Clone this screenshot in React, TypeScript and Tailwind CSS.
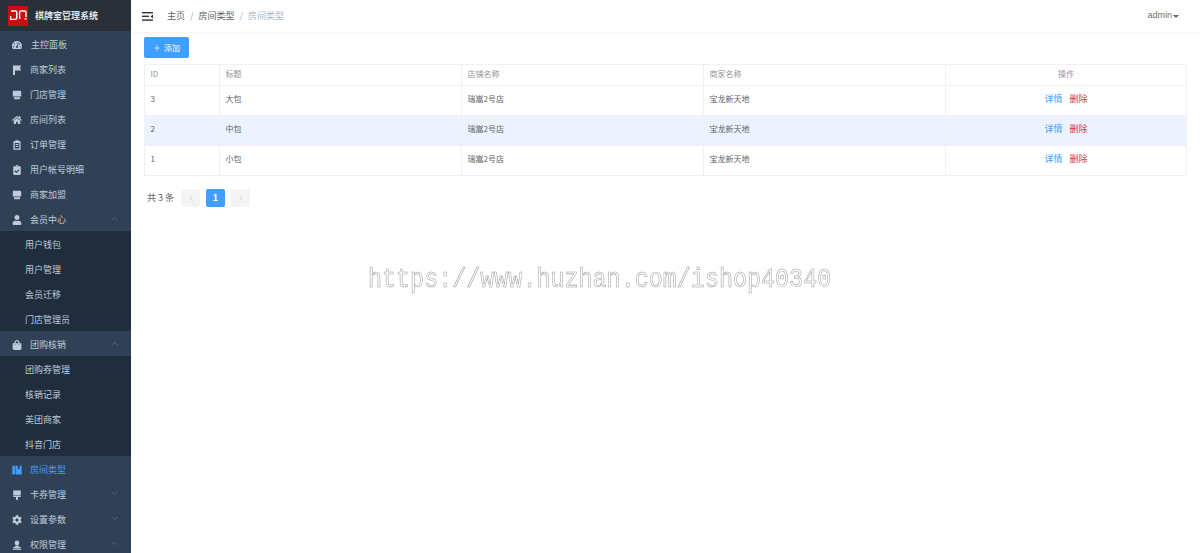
import React from 'react';
import { ChevronDown, ChevronUp, ChevronLeft, ChevronRight, Plus } from 'lucide-react';
import { FaTachometerAlt, FaHome, FaClipboardCheck, FaUser, FaShoppingBag, FaCog } from 'react-icons/fa';

type Item = {
  label: string;
  icon: React.ReactNode;
  open?: boolean;
  closed?: boolean;
  active?: boolean;
  children?: string[];
};

const iconClass = 'w-[10px] h-[10px]';

const FlagIcon = () => (
  <svg viewBox="0 0 10 10" className={iconClass} fill="currentColor">
    <path d="M1 0.5h8.2L8 3l1.2 2.6H3V10H1z" />
  </svg>
);

const StoreIcon = () => (
  <svg viewBox="0 0 10 10" className={iconClass} fill="currentColor">
    <path d="M2 0.8h6a1.2 1.2 0 0 1 1.2 1.2v4.4H.8V2A1.2 1.2 0 0 1 2 .8z" />
    <path d="M2 7.2h6v1.2a.8.8 0 0 1-.8.8H2.8a.8.8 0 0 1-.8-.8z" />
  </svg>
);

const ClipboardIcon = () => (
  <svg viewBox="0 0 10 10" className={iconClass} fill="currentColor">
    <path
      fillRule="evenodd"
      d="M3.4 0.3h3.2v1h2v8.4H1.4V1.3h2zM2.7 3v5.4h4.6V3zM3.6 4h2.8v.9H3.6zM3.6 6h2.8v.9H3.6z"
    />
  </svg>
);

const BookIcon = () => (
  <svg viewBox="0 0 10 10" className={iconClass} fill="currentColor">
    <path d="M.3 .8h2.6v8.6H.3z" />
    <path d="M3.5 .8h2.2v3.6l1-.8 1 .8V.8h2v8.6H3.5z" />
  </svg>
);

const RollerIcon = () => (
  <svg viewBox="0 0 10 10" className={iconClass} fill="currentColor">
    <path d="M1.2 .5h7.6v5H1.2z" />
    <path d="M1.2 6.1h7.6v1H6v2.6L5 10 4 9.7V7.1H1.2z" />
  </svg>
);

const AdminIcon = () => (
  <svg viewBox="0 0 10 10" className={iconClass} fill="currentColor">
    <circle cx="5" cy="2.9" r="2.3" />
    <path d="M3.6 5.4h2.8l.3 1.2 2.2.8v1.2H1.1V7.4l2.2-.8z" />
    <path d="M.8 9h8.4v.8H.8z" />
  </svg>
);

const menu: Item[] = [
  { label: '主控面板', icon: <FaTachometerAlt className={iconClass} /> },
  { label: '商家列表', icon: <FlagIcon /> },
  { label: '门店管理', icon: <StoreIcon /> },
  { label: '房间列表', icon: <FaHome className={iconClass} /> },
  { label: '订单管理', icon: <ClipboardIcon /> },
  { label: '用户帐号明细', icon: <FaClipboardCheck className={iconClass} /> },
  { label: '商家加盟', icon: <StoreIcon /> },
  {
    label: '会员中心',
    icon: <FaUser className={iconClass} />,
    open: true,
    children: ['用户钱包', '用户管理', '会员迁移', '门店管理员'],
  },
  {
    label: '团购核销',
    icon: <FaShoppingBag className={iconClass} />,
    open: true,
    children: ['团购券管理', '核销记录', '美团商家', '抖音门店'],
  },
  { label: '房间类型', icon: <BookIcon />, active: true },
  { label: '卡券管理', icon: <RollerIcon />, closed: true },
  { label: '设置参数', icon: <FaCog className={iconClass} />, closed: true },
  { label: '权限管理', icon: <AdminIcon />, closed: true },
];

const rows = [
  { id: 3, title: '大包' },
  { id: 2, title: '中包' },
  { id: 1, title: '小包' },
];

const Sidebar = () => (
  <aside className="w-[131px] h-full shrink-0 bg-[#304156] overflow-hidden">
    <div className="h-[31px] bg-[#2b2f3a] flex items-center pl-[8px]">
      <svg viewBox="0 0 20 20" className="w-[20px] h-[20px] shrink-0">
        <rect width="20" height="20" fill="#c80f0f" />
        <path
          d="M3 5h4.6a1.2 1.2 0 0 1 1.2 1.2v5.4a1.8 1.8 0 0 1-1.8 1.8H2.6V10M11.6 13V6.4A1.4 1.4 0 0 1 13 5h3.6A1.4 1.4 0 0 1 18 6.4V11"
          fill="none"
          stroke="#fff"
          strokeWidth="1.4"
        />
        <rect x="16.6" y="12" width="1.8" height="1.6" fill="#fff" />
      </svg>
      <span className="ml-[7px] text-[9px] font-bold text-[#dfe3e8] whitespace-nowrap">棋牌室管理系统</span>
    </div>
    {menu.map((item) => (
      <div key={item.label}>
        <div className={`h-[25px] pt-[2px] flex items-center pl-[12px] pr-[12px] ${item.active ? 'text-[#409eff]' : 'text-[#bfcbd9]'}`}>
          <span className="w-[10px] flex justify-center shrink-0">{item.icon}</span>
          <span className={`text-[9px] whitespace-nowrap ${item.label === '主控面板' ? 'ml-[9px]' : 'ml-[8px]'}`}>{item.label}</span>
          {item.open && <ChevronUp strokeWidth={1.5} className="ml-auto -mt-[2px] w-[9px] h-[9px] text-[#6f7f93]" />}
          {item.closed && <ChevronDown strokeWidth={1.5} className="ml-auto -mt-[2px] w-[9px] h-[9px] text-[#6f7f93]" />}
        </div>
        {item.children?.map((child) => (
          <div key={child} className="h-[25px] pt-[2px] flex items-center pl-[25px] bg-[#1f2d3d] text-[#bfcbd9] text-[9px]">
            {child}
          </div>
        ))}
      </div>
    ))}
  </aside>
);

const Topbar = () => (
  <header className="h-[32px] shrink-0 flex items-center pl-[11px] pr-[21px] bg-white shadow-[0_1px_2px_rgba(0,21,41,0.05)]">
    <svg viewBox="0 0 11 9" className="w-[11px] h-[9px] shrink-0" fill="#303133">
      <rect width="11" height="1.4" />
      <rect y="3.6" width="7" height="1.4" />
      <rect y="7.4" width="11" height="1.4" />
      <path d="M11 2.6v3.6L8.4 4.4z" />
    </svg>
    <div className="ml-[14px] flex items-center text-[9px] text-[#606266]">
      <span>主页</span>
      <span className="mx-[5px] text-[#a8abb2]">/</span>
      <span>房间类型</span>
      <span className="mx-[5px] text-[#a8abb2]">/</span>
      <span className="text-[#a9b6c6]">房间类型</span>
    </div>
    <div className="ml-auto flex items-center text-[9px] text-[#707070] font-['Liberation_Sans',sans-serif]">
      <span>admin</span>
      <span className="ml-[1px] border-x-[3px] border-t-[3px] border-x-transparent border-t-[#606266]" />
    </div>
  </header>
);

const cell = 'border-r border-[#eef1f6] pl-[5.5px] flex items-center shrink-0';

const TableRow = ({ id, title, hover }: { id: number; title: string; hover: boolean }) => (
  <div className={`flex h-[30px] border-t border-[#eef1f6] text-[8px] text-[#606266] ${hover ? 'bg-[#ecf3fe]' : 'bg-white'}`}>
    <div className={`${cell} w-[75px] pb-[3px]`}>{id}</div>
    <div className={`${cell} w-[242px] pb-[3px]`}>{title}</div>
    <div className={`${cell} w-[242px] pb-[3px]`}>瑞嵩2号店</div>
    <div className={`${cell} w-[242px] pb-[3px]`}>宝龙新天地</div>
    <div className="flex-1 pb-[3px] flex items-center justify-center gap-[7px] text-[9px]">
      <span className="text-[#409eff]">详情</span>
      <span className="text-[#d9363e]">删除</span>
    </div>
  </div>
);

const App = () => (
  <div className="relative w-[1200px] h-[553px] flex overflow-hidden bg-white font-['Noto_Sans_CJK_SC','Liberation_Sans',sans-serif]">
    <Sidebar />
    <main className="flex-1 min-w-0 flex flex-col">
      <Topbar />
      <div className="pl-[13px] pr-[13px] pt-[5px]">
        <button className="w-[45px] h-[21px] rounded-[2px] bg-[#409eff] text-white text-[8px] flex items-center justify-center gap-[3px]">
          <Plus className="w-[8px] h-[8px]" />
          添加
        </button>
        <div className="mt-[6px] border border-[#eef1f6]">
          <div className="flex h-[20px] text-[8px] text-[#909399]">
            <div className={`${cell} w-[75px] pb-[2px]`}>ID</div>
            <div className={`${cell} w-[242px] pb-[2px]`}>标题</div>
            <div className={`${cell} w-[242px] pb-[2px]`}>店铺名称</div>
            <div className={`${cell} w-[242px] pb-[2px]`}>商家名称</div>
            <div className="flex-1 pb-[2px] flex items-center justify-center">操作</div>
          </div>
          {rows.map((r) => (
            <TableRow key={r.id} id={r.id} title={r.title} hover={r.id === 2} />
          ))}
        </div>
        <div className="mt-[13px] flex items-center h-[18px] text-[9px] text-[#606266] pl-[3px]">
          <span className="w-[34px] whitespace-nowrap">共 3 条</span>
          <span className="w-[19px] h-[18px] rounded-[2px] bg-[#f4f4f5] flex items-center justify-center text-[#b4b8c0]">
            <ChevronLeft className="w-[10px] h-[10px]" strokeWidth={1.5} />
          </span>
          <span className="ml-[6px] w-[19px] h-[18px] rounded-[2px] bg-[#409eff] text-white font-bold flex items-center justify-center">1</span>
          <span className="ml-[6px] w-[19px] h-[18px] rounded-[2px] bg-[#f4f4f5] flex items-center justify-center text-[#b4b8c0]">
            <ChevronRight className="w-[10px] h-[10px]" strokeWidth={1.5} />
          </span>
        </div>
      </div>
    </main>
    {/* watermark sits over the page */}
    <div className="absolute left-[368px] top-[263px] text-[23.4px] leading-[34px] whitespace-nowrap text-white opacity-[0.99] will-change-transform [-webkit-text-stroke:0.5px_#9a9a9a] font-['Liberation_Mono',monospace] origin-center scale-y-[1.15] pointer-events-none">
      https://www.huzhan.com/ishop40340
    </div>
  </div>
);

export default App;
